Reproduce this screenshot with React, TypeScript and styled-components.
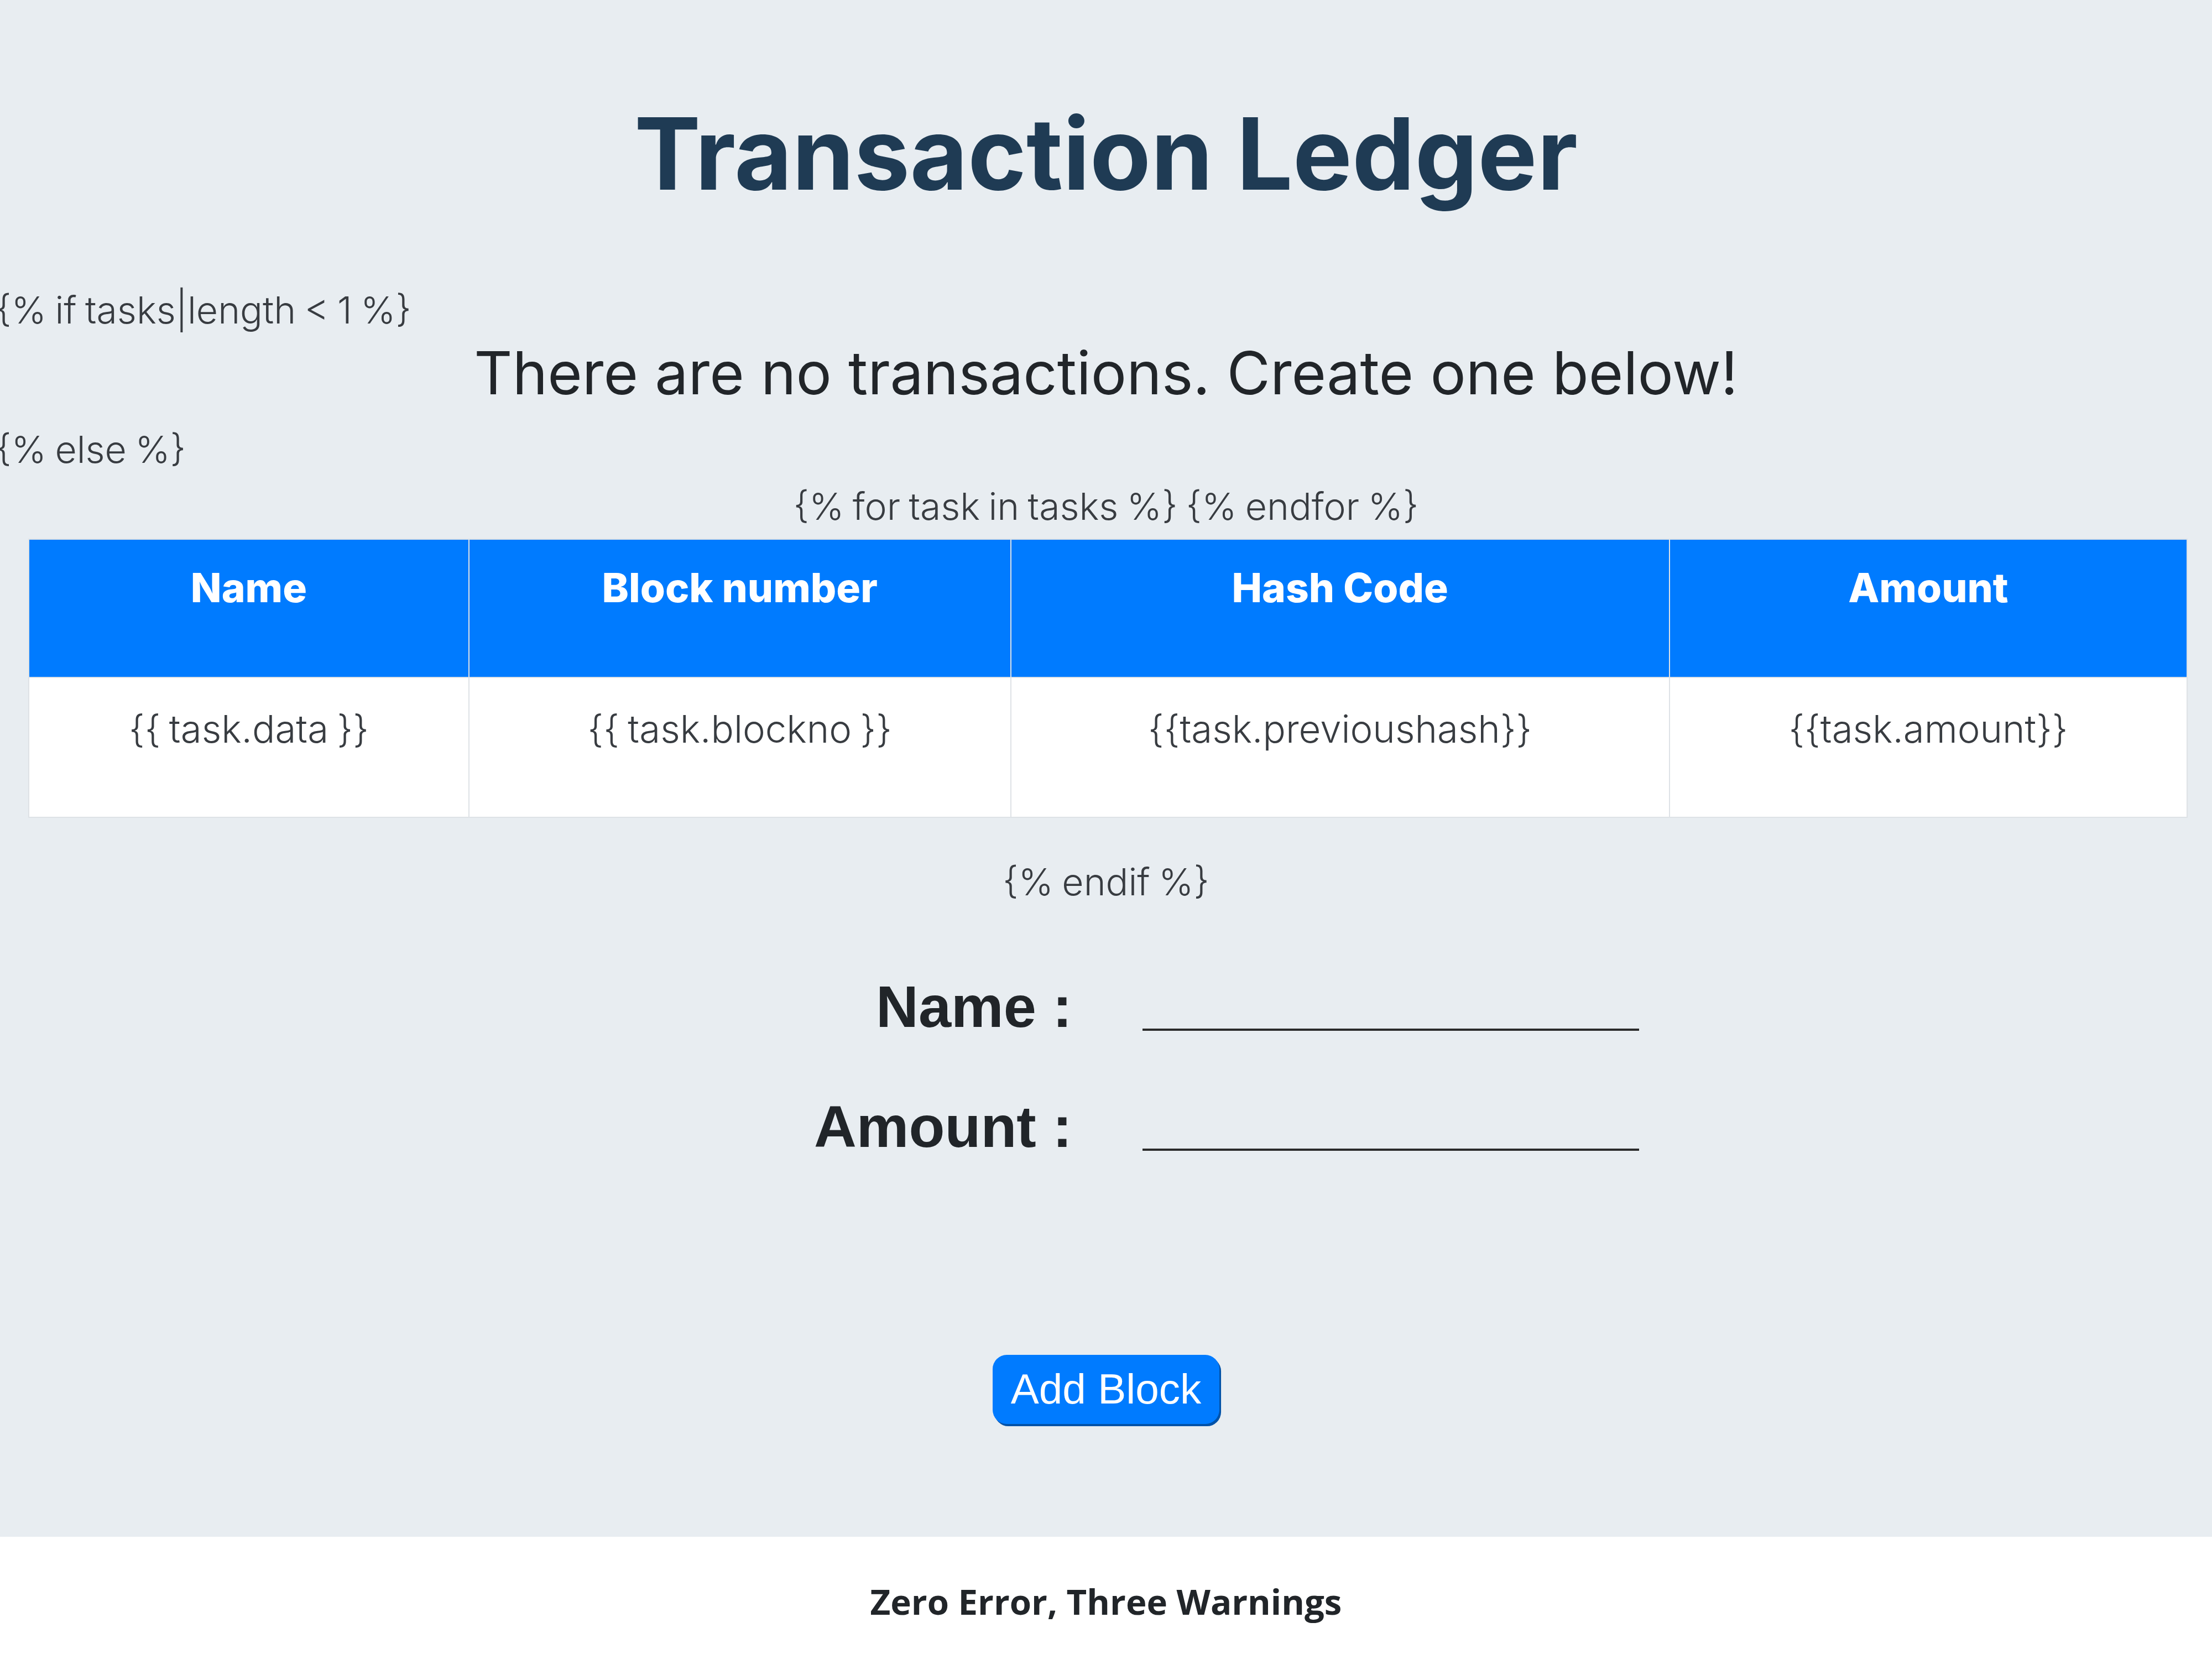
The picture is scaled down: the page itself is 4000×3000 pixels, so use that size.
import React from "react";
import styled, { createGlobalStyle } from "styled-components";

const K = 2.551;
const u = (n: number) => `${(n * K).toFixed(2)}px`;

const GlobalStyle = createGlobalStyle`
  html, body { margin: 0; padding: 0; }
  body {
    background: #e8edf1;
    font-family: "Inter", "Liberation Sans", sans-serif;
  }
  * { box-sizing: border-box; }
`;

const Page = styled.div`
  display: flex;
  flex-direction: column;
  width: 4000px;
  min-height: 3000px;
  background: #e8edf1;
  overflow: hidden;
`;

const Main = styled.main`
  display: flex;
  flex-direction: column;
  padding-bottom: ${u(80)};
`;

const Title = styled.h1`
  margin: ${u(68)} 0 0;
  font-family: "Inter", sans-serif;
  font-weight: 700;
  font-size: ${u(70.6)};
  line-height: ${u(82)};
  color: #1f3b54;
  text-align: center;
`;

const Template = styled.div<{ $center?: boolean; $mt?: number }>`
  margin-top: ${(p) => u(p.$mt ?? 0)};
  margin-left: ${(p) => (p.$center ? "0" : u(-3))};
  font-family: "Inter", sans-serif;
  font-weight: 300;
  font-size: ${u(26.6)};
  line-height: ${u(40)};
  word-spacing: ${u(-1.5)};
  color: #383c41;
  text-align: ${(p) => (p.$center ? "center" : "left")};
  white-space: pre;
`;

const Message = styled.h2`
  margin: 0;
  font-family: "Inter", sans-serif;
  font-weight: 400;
  font-size: ${u(42.1)};
  line-height: ${u(50)};
  color: #212529;
  text-align: center;
`;

const TableWrap = styled.div`
  margin: ${u(3.5)} 0 0 ${u(20)};
  width: ${u(1530)};
`;

const Table = styled.table`
  width: 100%;
  border-collapse: collapse;
  table-layout: fixed;
  background: #ffffff;
`;

const HeadRow = styled.tr`
  height: ${u(98)};
`;

const BodyRow = styled.tr`
  height: ${u(99)};
`;

const Th = styled.th`
  background: #007bff;
  color: #ffffff;
  padding: ${u(17)} ${u(8)} 0;
  vertical-align: top;
  font-family: "Inter", sans-serif;
  font-weight: 800;
  font-size: ${u(28.6)};
  line-height: ${u(34)};
  text-align: center;
  border: ${u(1)} solid #dee2e6;
`;

const Td = styled.td`
  padding: ${u(16)} ${u(8)} 0;
  vertical-align: top;
  font-family: "Inter", sans-serif;
  font-weight: 300;
  font-size: ${u(27)};
  line-height: ${u(40)};
  word-spacing: ${u(-1.5)};
  color: #383c41;
  text-align: center;
  border: ${u(1)} solid #dee2e6;
`;

const Form = styled.form`
  margin-top: ${u(44)};
  display: flex;
  flex-direction: column;
  align-items: center;
  gap: ${u(35)};
`;

const FormRow = styled.div`
  display: grid;
  grid-template-columns: ${u(354)} ${u(352)};
  column-gap: ${u(50)};
  height: ${u(50)};
`;

const Label = styled.label`
  text-align: right;
  font-family: "Liberation Sans", Arial, sans-serif;
  font-weight: 700;
  font-size: ${u(41.7)};
  line-height: ${u(50)};
  color: #212529;
`;

const Input = styled.input`
  width: 100%;
  height: ${u(42)};
  padding: 0;
  border: none;
  border-bottom: ${u(1.6)} solid #2b2b2b;
  background: transparent;
  outline: none;
  font-size: ${u(27)};
`;

const AddButton = styled.button`
  align-self: center;
  margin-top: ${u(136.5)};
  width: ${u(161)};
  height: ${u(49)};
  padding: 0;
  border: none;
  border-radius: ${u(10)};
  background: #007bff;
  color: #ffffff;
  font-family: "Liberation Sans", Arial, sans-serif;
  font-size: ${u(30)};
  box-shadow: ${u(1.2)} ${u(1.6)} 0 #0052a8;
  cursor: pointer;
`;

const Footer = styled.footer`
  flex: 1;
  background: #ffffff;
  padding-top: ${u(28)};
  text-align: center;
  font-family: "Open Sans", sans-serif;
  font-weight: 700;
  font-size: ${u(24.9)};
  line-height: ${u(36)};
  color: #212529;
`;

const columns = [
  { head: "Name", cell: "{{ task.data }}", width: 312 },
  { head: "Block number", cell: "{{ task.blockno }}", width: 384 },
  { head: "Hash Code", cell: "{{task.previoushash}}", width: 467 },
  { head: "Amount", cell: "{{task.amount}}", width: 367 },
];

export default function App() {
  return (
    <>
      <GlobalStyle />
      <Page>
        <Main>
          <Title>Transaction Ledger</Title>
          <Template $mt={49.5}>{"{% if tasks|length < 1 %}"}</Template>
          <Message>There are no transactions. Create one below!</Message>
          <Template $mt={9}>{"{% else %}"}</Template>
          <Template $center>{"{% for task in tasks %} {% endfor %}"}</Template>
          <TableWrap>
            <Table>
              <colgroup>
                {columns.map((c) => (
                  <col key={c.head} style={{ width: u(c.width) }} />
                ))}
              </colgroup>
              <thead>
                <HeadRow>
                  {columns.map((c) => (
                    <Th key={c.head}>{c.head}</Th>
                  ))}
                </HeadRow>
              </thead>
              <tbody>
                <BodyRow>
                  {columns.map((c) => (
                    <Td key={c.head}>{c.cell}</Td>
                  ))}
                </BodyRow>
              </tbody>
            </Table>
          </TableWrap>
          <Template $center $mt={25}>{"{% endif %}"}</Template>
          <Form onSubmit={(e) => e.preventDefault()}>
            <FormRow>
              <Label htmlFor="name">Name :</Label>
              <Input id="name" type="text" />
            </FormRow>
            <FormRow>
              <Label htmlFor="amount">Amount :</Label>
              <Input id="amount" type="text" />
            </FormRow>
          </Form>
          <AddButton type="button">Add Block</AddButton>
        </Main>
        <Footer>Zero Error, Three Warnings</Footer>
      </Page>
    </>
  );
}
